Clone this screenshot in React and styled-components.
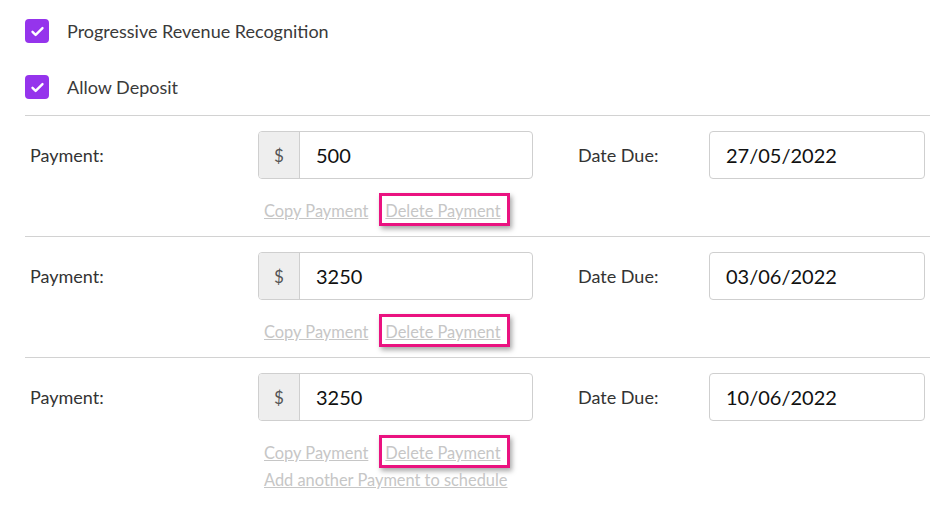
import React from "react";
import styled, { createGlobalStyle } from "styled-components";

const GlobalStyle = createGlobalStyle`
  body {
    margin: 0;
    background: #fff;
    font-family: Lato, "Liberation Sans", sans-serif;
    color: #333;
  }
`;

const Page = styled.div`
  width: 905px;
  padding: 3px 0 0 25px;
`;

const CheckRow = styled.label`
  display: flex;
  align-items: center;
  gap: 18px;
  height: 56px;
  font-size: 18px;
  color: #3a3a3a;
`;

const CheckBox = styled.span`
  width: 24px;
  height: 24px;
  border-radius: 4px;
  background: #9534ec;
  display: flex;
  align-items: center;
  justify-content: center;
`;

const PaymentRow = styled.div`
  border-top: 1px solid #d2d2d2;
  padding: 15px 0 14px;
`;

const Fields = styled.div`
  display: grid;
  grid-template-columns: 233px 275px 176px 216px;
  align-items: center;
  height: 48px;
`;

const Label = styled.div`
  font-size: 18px;
  color: #333;
  padding-left: ${(p) => p.$indent}px;
`;

const InputGroup = styled.div`
  display: flex;
  height: 48px;
  box-sizing: border-box;
  border: 1px solid #cfcfcf;
  border-radius: 4px;
  overflow: hidden;
`;

const Addon = styled.div`
  width: 40px;
  background: #eeeeee;
  border-right: 1px solid #cfcfcf;
  display: flex;
  align-items: center;
  justify-content: center;
  font-size: 17px;
  color: #555;
`;

const Value = styled.div`
  flex: 1;
  display: flex;
  align-items: center;
  padding-left: 16px;
  font-size: 20px;
  color: #111;
`;

const Links = styled.div`
  display: flex;
  flex-direction: column;
  gap: 3px;
  margin: 19px 0 0 ${233 + 6}px;
`;

const LinkLine = styled.div`
  display: flex;
  gap: 17px;
  height: 24px;
  align-items: center;
`;

const TextLink = styled.a`
  position: relative;
  font-size: 16.4px;
  color: #c6c6c6;
  text-decoration: underline;
  cursor: pointer;

  ${(p) =>
    p.$marked &&
    `
    &::after {
      content: "";
      position: absolute;
      top: -8px;
      left: -6px;
      right: -9px;
      bottom: -6px;
      border: 3px solid #ea1280;
      box-shadow: 2px 3px 5px rgba(0, 0, 0, 0.35);
      pointer-events: none;
    }
  `}
`;

const Check = () => (
  <svg width="15" height="15" viewBox="0 0 24 24" fill="none">
    <path
      d="M4 12.5l5 5L20 6.5"
      stroke="#fff"
      strokeWidth="3.8"
      strokeLinecap="round"
      strokeLinejoin="round"
    />
  </svg>
);

const payments = [
  { amount: "500", due: "27/05/2022" },
  { amount: "3250", due: "03/06/2022" },
  { amount: "3250", due: "10/06/2022" },
];

export default function App() {
  return (
    <>
      <GlobalStyle />
      <Page>
        <CheckRow>
          <CheckBox>
            <Check />
          </CheckBox>
          Progressive Revenue Recognition
        </CheckRow>
        <CheckRow>
          <CheckBox>
            <Check />
          </CheckBox>
          Allow Deposit
        </CheckRow>
        {payments.map((p, i) => (
          <PaymentRow key={i}>
            <Fields>
              <Label $indent={5}>Payment:</Label>
              <InputGroup>
                <Addon>$</Addon>
                <Value>{p.amount}</Value>
              </InputGroup>
              <Label $indent={45}>Date Due:</Label>
              <InputGroup>
                <Value>{p.due}</Value>
              </InputGroup>
            </Fields>
            <Links>
              <LinkLine>
                <TextLink>Copy Payment</TextLink>
                <TextLink $marked>Delete Payment</TextLink>
              </LinkLine>
              {i === payments.length - 1 && (
                <LinkLine>
                  <TextLink>Add another Payment to schedule</TextLink>
                </LinkLine>
              )}
            </Links>
          </PaymentRow>
        ))}
      </Page>
    </>
  );
}
